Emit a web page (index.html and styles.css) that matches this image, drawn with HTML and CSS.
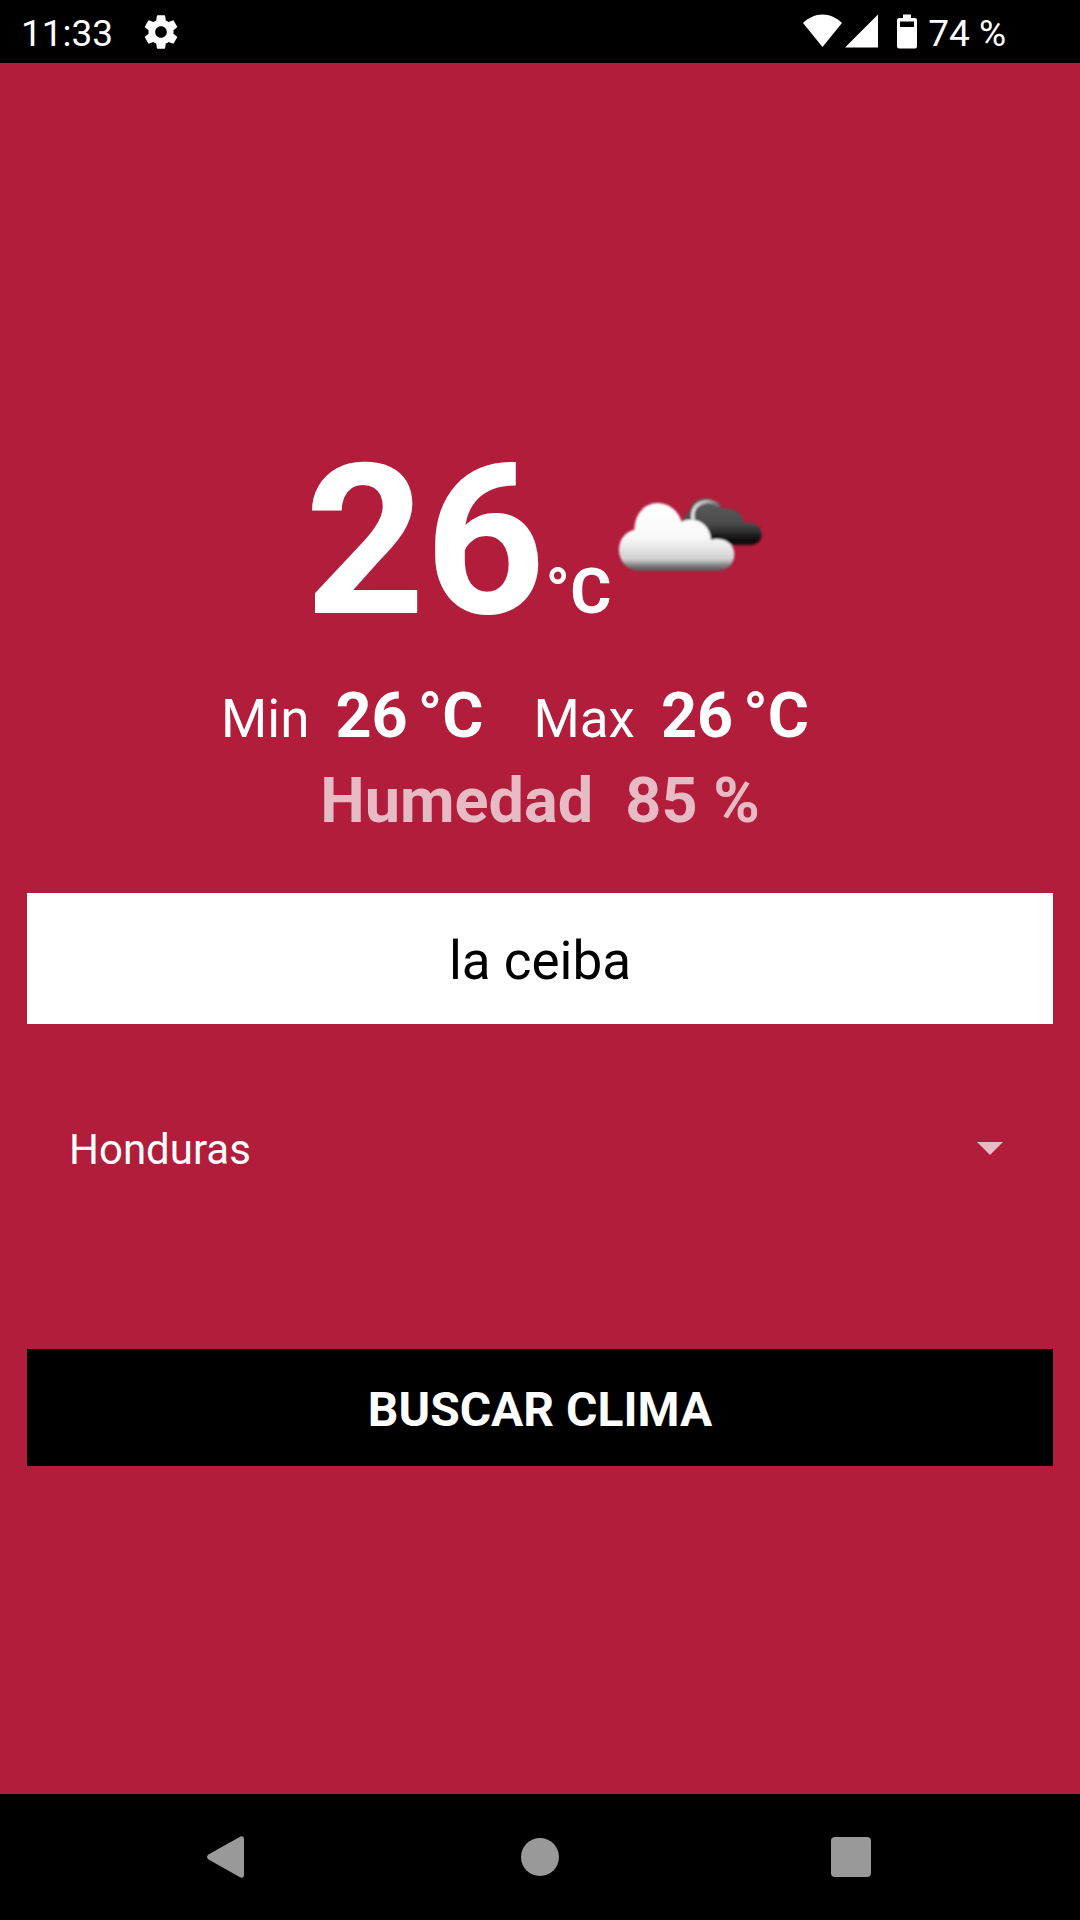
FILE: index.html
```html
<!DOCTYPE html>
<html lang="es">
<head>
<meta charset="utf-8">
<meta name="viewport" content="width=device-width, initial-scale=1">
<title>Clima</title>
<link rel="stylesheet" href="styles.css">
</head>
<body>
<header class="status">
  <time class="clock">11:33</time>
  <svg class="gear" width="40" height="40" viewBox="0 0 24 24" aria-hidden="true"><path fill="#fff" d="M19.43 12.98c.04-.32.07-.64.07-.98s-.03-.66-.07-.98l2.11-1.65c.19-.15.24-.42.12-.64l-2-3.46c-.12-.22-.39-.3-.61-.22l-2.49 1c-.52-.4-1.08-.73-1.69-.98l-.38-2.65C14.46 2.18 14.25 2 14 2h-4c-.25 0-.46.18-.49.42l-.38 2.65c-.61.25-1.17.59-1.69.98l-2.49-1c-.23-.09-.49 0-.61.22l-2 3.46c-.13.22-.07.49.12.64l2.11 1.65c-.04.32-.07.65-.07.98s.03.66.07.98l-2.11 1.65c-.19.15-.24.42-.12.64l2 3.46c.12.22.39.3.61.22l2.49-1c.52.4 1.08.73 1.69.98l.38 2.65c.03.24.24.42.49.42h4c.25 0 .46-.18.49-.42l.38-2.65c.61-.25 1.17-.59 1.69-.98l2.49 1c.23.09.49 0 .61-.22l2-3.46c.12-.22.07-.49-.12-.64l-2.11-1.65zM12 15.500c-1.930 0-3.500-1.570-3.500-3.500s1.570-3.500 3.500-3.500 3.500 1.570 3.500 3.500-1.570 3.500-3.500 3.500z"/></svg>
  <div class="indicators">
    <svg width="76" height="36" viewBox="0 0 76 36" aria-hidden="true"><path fill="#fff" d="M0 9C6 3.500 12 .5 19.500 .5S33 3.500 39 9L19.500 33z"/><path fill="#fff" d="M75 .5v33H42z"/></svg>
    <svg class="battery" width="20" height="36" viewBox="0 0 20 36" aria-hidden="true"><path fill="#fff" fill-rule="evenodd" d="M6 .5h8V4h4a2 2 0 0 1 2 2v26.500a2 2 0 0 1-2 2H2a2 2 0 0 1-2-2V6a2 2 0 0 1 2-2h4zM3 7.500v5.500h14V7.500z"/></svg>
    <span class="level">74 %</span>
  </div>
</header>

<main class="screen">
  <section class="current" aria-label="Clima actual">
    <div class="temp">
      <strong class="degrees">26</strong><strong class="value">°C</strong>
      <svg class="weather" width="158" height="77" viewBox="54 78 474 231" role="img" aria-label="Nublado">
        <defs>
          <linearGradient id="dark" gradientUnits="userSpaceOnUse" x1="0" y1="85" x2="0" y2="228"><stop offset="0" stop-color="#5c5c5c"/><stop offset=".55" stop-color="#4c4c4c"/><stop offset=".92" stop-color="#080808"/><stop offset="1" stop-color="#111"/></linearGradient>
          <linearGradient id="light" gradientUnits="userSpaceOnUse" x1="0" y1="106" x2="0" y2="306"><stop offset="0" stop-color="#fff"/><stop offset=".5" stop-color="#f8f8f8"/><stop offset=".82" stop-color="#d2d2d2"/><stop offset=".93" stop-color="#777"/><stop offset="1" stop-color="#605055"/></linearGradient>
          <linearGradient id="rim" gradientUnits="userSpaceOnUse" x1="270" y1="0" x2="370" y2="0"><stop offset="0" stop-color="#eee"/><stop offset=".6" stop-color="#aaa"/><stop offset="1" stop-color="#555"/></linearGradient>
          <filter id="soft" x="-10%" y="-10%" width="120%" height="120%"><feGaussianBlur stdDeviation="2.500"/></filter>
        </defs>
        <g filter="url(#soft)">
          <path fill="url(#dark)" d="M246 160C258 140 268 134 276 116C286 82 346 74 368 120C394 112 428 126 436 162C466 154 488 174 488 196C488 214 474 228 456 228H320z"/>
          <path fill="none" stroke="url(#rim)" stroke-width="11" d="M283 152C272 106 322 82 362 110"/>
          <path fill="url(#light)" d="M106 182C110 82 222 78 248 158C290 138 334 166 336 212C376 204 406 224 406 256C406 286 384 306 354 306H124C84 306 59 274 60 240C61 210 80 188 106 182z"/>
        </g>
      </svg>
    </div>
    <dl class="range">
      <div class="pair"><dt>Min</dt><dd class="value reading"><span>26</span><span>°C</span></dd></div>
      <div class="pair"><dt>Max</dt><dd class="value reading"><span>26</span><span>°C</span></dd></div>
    </dl>
    <p class="humidity value"><span>Humedad</span><span>85 %</span></p>
  </section>

  <form class="search">
    <input class="city" type="text" value="la ceiba" aria-label="Ciudad">
    <div class="country">
      <select class="picker" aria-label="País"><option>Honduras</option></select>
      <svg class="caret" width="26" height="13" viewBox="0 0 26 13" aria-hidden="true"><path d="M0 0h26L13 13z"/></svg>
    </div>
    <button class="submit" type="button">BUSCAR CLIMA</button>
  </form>
</main>

<nav class="keys" aria-label="Sistema">
  <button type="button" class="key" aria-label="Atrás"><svg width="42" height="42" viewBox="0 0 42 42"><path d="M1.500 18.500 33.500.6Q37 -.6 37 3v36q0 3.600-3.500 2.400L1.500 23.500q-3-2.500 0-5z"/></svg></button>
  <button type="button" class="key" aria-label="Inicio"><svg width="42" height="42" viewBox="0 0 42 42"><circle cx="21" cy="21" r="19"/></svg></button>
  <button type="button" class="key" aria-label="Recientes"><svg width="42" height="42" viewBox="0 0 42 42"><rect x="0" y="1" width="40" height="40" rx="4"/></svg></button>
</nav>
</body>
</html>
```
FILE: styles.css
```css
* { box-sizing: border-box; }

body {
  margin: 0;
  min-height: 100vh;
  display: flex;
  flex-direction: column;
  background: #b11d3b;
  color: #fff;
  font-family: Roboto, "Liberation Sans", sans-serif;
}

svg { display: block; }

.status {
  display: flex;
  align-items: center;
  height: 63px;
  padding: 0 74px 0 21px;
  background: #000;
  font-size: 37px;
  line-height: 61px;
}

.clock,
.level { padding-top: 4px; }

.gear { margin-left: 28px; }

.indicators {
  display: flex;
  align-items: center;
  margin-left: auto;
}

.battery { margin: 0 11px 0 18px; }

.screen {
  flex: 1;
  display: flex;
  flex-direction: column;
  justify-content: center;
  padding: 0 27px;
}

.current {
  display: flex;
  flex-direction: column;
  align-items: center;
}

.temp {
  display: flex;
  align-items: baseline;
  padding: 26px 0 9px;
}

.degrees {
  font-size: 210px;
  line-height: 246px;
}

.value {
  font-size: 63px;
  font-weight: 700;
  line-height: 85px;
}

.weather {
  align-self: center;
  margin: 0 0 14px 6px;
}

.range {
  display: flex;
  gap: 50px;
  margin: 0;
  padding-right: 50px;
}

.pair {
  display: flex;
  align-items: baseline;
  gap: 26px;
}

.pair dt { font-size: 53px; }

.pair dd { margin: 0; }

.reading {
  display: flex;
  gap: 10px;
}

.humidity {
  display: flex;
  gap: 32px;
  margin: 0;
  color: #e8bbc4;
}

.search {
  display: flex;
  flex-direction: column;
  margin-top: 50px;
}

.city {
  width: 100%;
  height: 131px;
  padding: 6px 26px 0;
  border: 0;
  background: #fff;
  color: #000;
  font: 53px Roboto, "Liberation Sans", sans-serif;
  text-align: center;
}

.country {
  display: flex;
  align-items: center;
  margin: 62px 0 137px;
  padding: 0 50px 0 42px;
}

.picker {
  flex: 1;
  height: 126px;
  padding: 2px 0 0;
  border: 0;
  appearance: none;
  background: transparent;
  color: #fff;
  font: 42px Roboto, "Liberation Sans", sans-serif;
}

.caret { fill: #e8bbc4; }

.submit {
  height: 117px;
  padding: 4px 0 0;
  border: 0;
  background: #000;
  color: #fff;
  font: 700 48px Roboto, "Liberation Sans", sans-serif;
}

.keys {
  display: grid;
  grid-template-columns: repeat(3, 1fr);
  height: 126px;
  padding: 0 72px;
  background: #000;
}

.key {
  display: grid;
  place-items: center;
  padding: 0;
  border: 0;
  background: none;
  fill: #999;
}
```
